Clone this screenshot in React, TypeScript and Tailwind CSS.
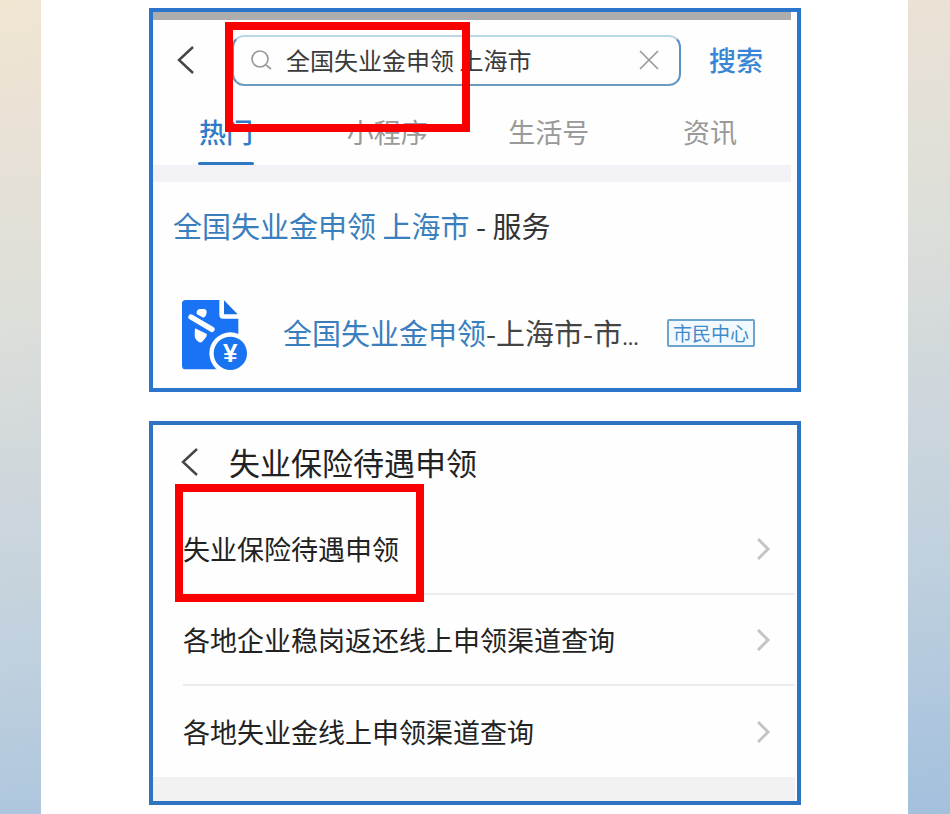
import React, { useState } from 'react';

interface TabButtonProps {
  label: string;
  active: boolean;
  onClick: () => void;
}

interface MenuRowProps {
  title: string;
  last?: boolean;
}

const BackIcon = () => (
  <svg className="h-7 w-[18px]" viewBox="0 0 18 28" fill="none" stroke="#444" strokeWidth="2.4">
    <path d="M16 1 L2 14 L16 27" />
  </svg>
);

const SearchIcon = () => (
  <svg className="h-5 w-[22px] shrink-0" viewBox="0 0 22 20" fill="none" stroke="#9a9a9a" strokeWidth="1.7">
    <circle cx="10" cy="9" r="8" />
    <path d="M16 15 L21 19" />
  </svg>
);

const CloseIcon = () => (
  <svg className="h-5 w-5" viewBox="0 0 20 20" fill="none" stroke="#9a9a9a" strokeWidth="1.7">
    <path d="M1 1 L19 19 M19 1 L1 19" />
  </svg>
);

const ChevronIcon = () => (
  <svg className="h-[22px] w-[14px] shrink-0" viewBox="0 0 14 22" fill="none" stroke="#c4c4c4" strokeWidth="3">
    <path d="M1 1 L11 11 L1 21" />
  </svg>
);

// Document with a folded corner and a yuan coin
const ClaimIcon = () => (
  <svg className="h-[72px] w-[68px] shrink-0" viewBox="34 27 204 216">
    <path
      fill="#1a73f5"
      d="M48 30 H149 V75 Q149 86 160 86 H206 V238 H48 Q37 238 37 227 V41 Q37 30 48 30 Z"
    />
    <path fill="#1a6fe0" d="M163 31 L204 73 H163 Z" />
    <path
      fill="#fff"
      d="M81 66 Q83 57 91 57 H103 Q111 58 111 66 Q111 78 101 83 L81 72 Z M76 115 L112 132 Q111 142 104 148 Q95 162 86 155 Q75 148 75 136 Z"
    />
    <path d="M64 81 L127 118" fill="none" stroke="#fff" strokeWidth="16" strokeLinecap="round" />
    <circle cx="182" cy="190" r="63" fill="#fff" />
    <circle cx="182" cy="190" r="50" fill="#1a73f0" />
    <text
      x="182"
      y="217"
      textAnchor="middle"
      fontFamily="'Liberation Sans', sans-serif"
      fontWeight="700"
      fontSize="78"
      fill="#fff"
    >
      ¥
    </text>
  </svg>
);

const TabButton = ({ label, active, onClick }: TabButtonProps) => (
  <button
    type="button"
    role="tab"
    aria-selected={active}
    onClick={onClick}
    className="flex w-20 flex-col items-center justify-between whitespace-nowrap"
  >
    <span
      className={
        active
          ? 'pt-3 text-[27px] leading-10 font-medium text-[#2f7bc8]'
          : 'pt-3 text-[27px] leading-10 text-[#999]'
      }
    >
      {label}
    </span>
    {active && <span className="h-[3px] w-14 rounded-full bg-[#2f78c4]" />}
  </button>
);

const MenuRow = ({ title, last }: MenuRowProps) => (
  <li className="pr-0.5 pl-[30px]">
    <a
      href="#detail"
      className={
        last
          ? 'flex h-[91px] items-center justify-between pr-6'
          : 'flex h-[91px] items-center justify-between border-b-2 border-[#ececec] pr-6'
      }
    >
      <span className="text-[27px] leading-10 text-[#222]">{title}</span>
      <ChevronIcon />
    </a>
  </li>
);

const SearchPanel = () => {
  const [query, setQuery] = useState('全国失业金申领 上海市');
  const [tab, setTab] = useState('热门');

  return (
    <section className="relative border-4 border-[#2c75cd] bg-[#fefefe]">
      <div className="mr-1.5 h-2 bg-[#adadad]" />

      <form className="flex h-20 items-center pr-[34px] pl-6" onSubmit={(e) => e.preventDefault()}>
        <button type="button" aria-label="返回" className="mr-[37px]">
          <BackIcon />
        </button>
        <div className="flex h-[51px] min-w-0 flex-1 items-center rounded-xl border-2 border-t-[#b9d7e6] border-r-[#5b92c6] border-b-[#6c9cbd] border-l-[#5b92c6] pr-5 pl-4">
          <SearchIcon />
          <input
            aria-label="搜索内容"
            value={query}
            onChange={(e) => setQuery(e.target.value)}
            className="ml-3.5 min-w-0 flex-1 bg-transparent text-2xl text-[#3a3a3a] outline-none"
          />
          <button type="button" aria-label="清除" onClick={() => setQuery('')}>
            <CloseIcon />
          </button>
        </div>
        <button type="submit" className="ml-7 text-[27px] leading-10 font-medium text-[#3a86d6]">
          搜索
        </button>
      </form>

      <div role="tablist" className="flex h-[65px] justify-between pr-[47px] pl-[33px]">
        {tabs.map((label) => (
          <TabButton key={label} label={label} active={label === tab} onClick={() => setTab(label)} />
        ))}
      </div>
      <div className="mr-1.5 h-[17px] bg-[#f2f2f7]" />

      <h2 className="flex h-[88px] items-center pl-5 text-[29px] whitespace-pre text-[#333]">
        <span className="text-[#3a7fbd]">全国失业金申领 上海市</span> - 服务
      </h2>

      <a href="#service" className="flex h-[118px] items-center pt-3 pr-[42px] pl-7">
        <ClaimIcon />
        <span className="ml-[34px] flex-1 pb-1 text-[29px] whitespace-nowrap text-[#444]">
          <span className="text-[#3a7fbd]">全国失业金申领</span>-上海市-市<span className="text-xl">...</span>
        </span>
        <span className="mb-1 rounded-xs border-2 border-[#6ba3cc] bg-[#f1f9fe] px-1 text-[19px] leading-6 text-[#3f8bc9]">
          市民中心
        </span>
      </a>

      {/* Highlight over the search field */}
      <div className="pointer-events-none absolute top-[10px] left-[72px] h-[110px] w-[245px] border-8 border-[#fb0000]" />
    </section>
  );
};

const BenefitPanel = () => (
  <section className="relative border-4 border-[#2f74c0] bg-[#fefefe]">
    <header className="flex h-[79px] items-center pb-1.5 pl-7">
      <button type="button" aria-label="返回">
        <BackIcon />
      </button>
      <h2 className="ml-[30px] text-[31px] leading-10 text-[#222]">失业保险待遇申领</h2>
    </header>
    <ul>
      {rows.map((title, index) => (
        <MenuRow key={title} title={title} last={index === rows.length - 1} />
      ))}
    </ul>
    <div className="mr-0.5 h-6 bg-[#f2f2f3]" />

    {/* Highlight over the first entry */}
    <div className="pointer-events-none absolute top-[59px] left-[22px] h-[118px] w-[249px] border-8 border-[#fb0000]" />
  </section>
);

const App = () => (
  <div
    lang="zh-CN"
    className="flex min-h-screen bg-[linear-gradient(174deg,#f1e6d2_0%,#e9e1d6_14%,#dddfd9_34%,#cfd7dc_53%,#bfd0de_73%,#a3c0dd_100%)] pr-[42px] pl-[41px] font-['Noto_Sans_CJK_SC',sans-serif]"
  >
    <main className="flex flex-1 flex-col gap-[29px] bg-white pt-2 pr-[107px] pb-[9px] pl-[108px]">
      <SearchPanel />
      <BenefitPanel />
    </main>
  </div>
);

const tabs = ['热门', '小程序', '生活号', '资讯'];

const rows = ['失业保险待遇申领', '各地企业稳岗返还线上申领渠道查询', '各地失业金线上申领渠道查询'];

export default App;
